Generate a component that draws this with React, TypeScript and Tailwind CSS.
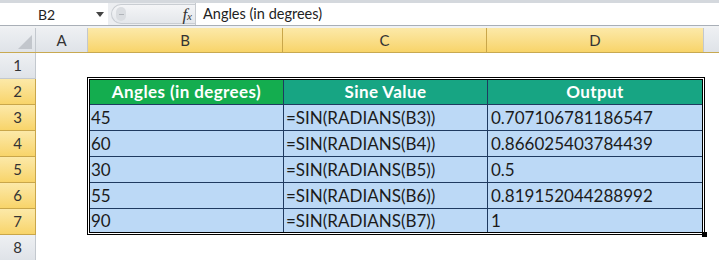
import React from "react";

const font = { fontFamily: "Lato, 'Open Sans', sans-serif" };

const rows = [
  ["45", "=SIN(RADIANS(B3))", "0.707106781186547"],
  ["60", "=SIN(RADIANS(B4))", "0.866025403784439"],
  ["30", "=SIN(RADIANS(B5))", "0.5"],
  ["55", "=SIN(RADIANS(B6))", "0.819152044288992"],
  ["90", "=SIN(RADIANS(B7))", "1"],
];

const yellow = "bg-gradient-to-b from-[#fce9a8] to-[#f8d469]";
const gray = "bg-gradient-to-b from-[#eef0f3] to-[#dfe3e8]";

export default function App() {
  return (
    <div className="w-[719px] h-[260px] overflow-hidden bg-white text-[#222]" style={font}>
      {/* formula bar */}
      <div className="h-[28px] flex flex-col bg-[#e3e6ea]">
        <div className="h-[3px] bg-[#d4d8dd]" />
        <div className="h-[22px] flex">
          <div className="w-[108px] bg-white flex items-center relative">
            <span className="ml-[38px] text-[14px]">B2</span>
            <svg className="absolute left-[96px] top-[9px]" width="8" height="5" viewBox="0 0 8 5">
              <path d="M0 0 L8 0 L4 5 Z" fill="#444" />
            </svg>
          </div>
          <div className="w-[87px] flex items-center bg-[#eceef1]">
            <div className="ml-[3px] h-[20px] w-[84px] rounded-l-full border border-[#c9cdd2] border-r-0 bg-gradient-to-b from-[#f4f5f7] to-[#e4e7eb] flex items-center">
              <div className="ml-[4px] w-[10px] h-[14px] rounded-full bg-[#dadde1] flex items-center justify-center">
                <div className="w-[5px] h-[1px] bg-[#b0b4b9]" />
              </div>
              <span
                className="ml-auto mr-[3px] italic text-[17px] leading-none text-[#333]"
                style={{ fontFamily: "'Liberation Serif', serif" }}
              >
                f<span className="text-[11px]">x</span>
              </span>
            </div>
          </div>
          <div className="flex-1 bg-white border-l border-[#c6cacf] flex items-center">
            <span className="ml-[7px] text-[14.5px]">Angles (in degrees)</span>
          </div>
        </div>
        <div className="h-[1px] bg-[#a9afb7]" />
        <div className="flex-1 bg-[#f0f2f4]" />
      </div>

      {/* column headers */}
      <div className="h-[25px] flex text-[15px] text-[#333] border-b border-[#c8a951]">
        <div className={`w-[36px] ${gray} border-r border-[#c3c8ce] relative`}>
          <svg className="absolute right-[3px] bottom-[3px]" width="14" height="14" viewBox="0 0 14 14">
            <path d="M14 0 L14 14 L0 14 Z" fill="#c2c6cc" />
          </svg>
        </div>
        <div className={`w-[52px] ${gray} border-r border-[#c3c8ce] flex items-center justify-center`}>A</div>
        <div className={`w-[195px] ${yellow} border-r border-[#c9a64a] flex items-center justify-center`}>B</div>
        <div className={`w-[204px] ${yellow} border-r border-[#c9a64a] flex items-center justify-center`}>C</div>
        <div className={`w-[217px] ${yellow} border-r border-[#c3c8ce] flex items-center justify-center`}>D</div>
        <div className={`flex-1 ${gray}`} />
      </div>

      {/* body */}
      <div className="flex">
        <div className="w-[36px] flex flex-col text-[15px] text-[#333]">
          {[1, 2, 3, 4, 5, 6, 7, 8].map((n) => (
            <div
              key={n}
              className={`h-[26px] flex items-center justify-center border-r border-b ${
                n >= 2 && n <= 7 ? `${yellow} border-[#c9a64a]` : `${gray} border-[#c3c8ce]`
              }`}
            >
              {n}
            </div>
          ))}
        </div>
        <div className="flex-1 pt-[24px] pl-[51px]">
          <div className="relative w-[618px] border-[3px] border-double border-black">
            <div className="flex h-[24px] text-white font-bold text-[17px] tracking-[0.4px]">
              <div className="w-[193px] bg-[#14ad4f] flex items-center justify-center">Angles (in degrees)</div>
              <div className="w-[1px] bg-[#1f3a60]" />
              <div className="w-[203px] bg-[#17a583] flex items-center justify-center">Sine Value</div>
              <div className="w-[1px] bg-[#1f3a60]" />
              <div className="flex-1 bg-[#17a583] flex items-center justify-center">Output</div>
            </div>
            {rows.map((r, i) => (
              <div
                key={i}
                className={`flex ${i < 4 ? "h-[26px]" : "h-[24px]"} border-t border-[#1f3a60] text-[17px] text-[#1b1b1b] bg-[#bcd9f6]`}
              >
                <div className="w-[193px] flex items-center pl-[1px]">{r[0]}</div>
                <div className="w-[1px] bg-[#1f3a60]" />
                <div className="w-[203px] flex items-center pl-[2px]">{r[1]}</div>
                <div className="w-[1px] bg-[#1f3a60]" />
                <div className="flex-1 flex items-center pl-[3px]">{r[2]}</div>
              </div>
            ))}
            <div className="absolute -right-[5px] -bottom-[5px] w-[5px] h-[5px] bg-black" />
          </div>
        </div>
      </div>
    </div>
  );
}
